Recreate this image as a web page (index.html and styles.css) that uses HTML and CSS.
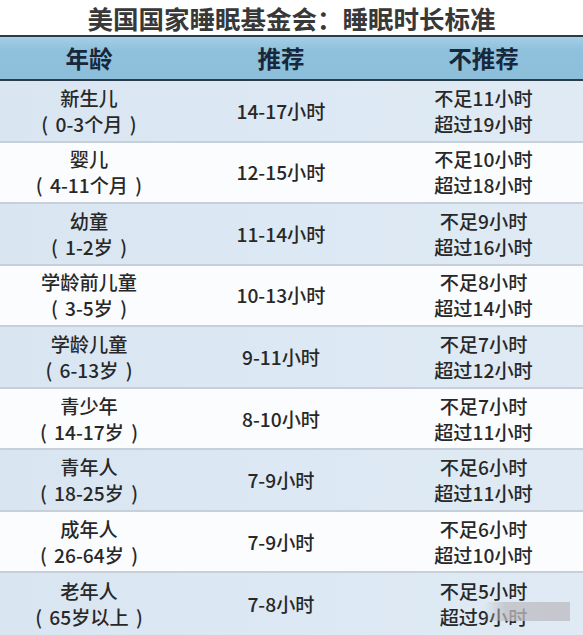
FILE: index.html
```html
<!DOCTYPE html>
<html lang="zh-CN">
<head>
<meta charset="utf-8">
<title>美国国家睡眠基金会：睡眠时长标准</title>
<link rel="stylesheet" href="styles.css">
</head>
<body>
<div class="page">
  <h1 class="title">美国国家睡眠基金会：睡眠时长标准</h1>
  <div class="head">
    <div class="cell">年龄</div>
    <div class="cell">推荐</div>
    <div class="cell">不推荐</div>
  </div>
  <div class="body">
    <div class="row alt">
      <div class="cell">新生儿<br>( 0-3个月 )</div>
      <div class="cell">14-17小时</div>
      <div class="cell">不足11小时<br>超过19小时</div>
    </div>
    <div class="row">
      <div class="cell">婴儿<br>( 4-11个月 )</div>
      <div class="cell">12-15小时</div>
      <div class="cell">不足10小时<br>超过18小时</div>
    </div>
    <div class="row alt">
      <div class="cell">幼童<br>( 1-2岁 )</div>
      <div class="cell">11-14小时</div>
      <div class="cell">不足9小时<br>超过16小时</div>
    </div>
    <div class="row">
      <div class="cell">学龄前儿童<br>( 3-5岁 )</div>
      <div class="cell">10-13小时</div>
      <div class="cell">不足8小时<br>超过14小时</div>
    </div>
    <div class="row alt">
      <div class="cell">学龄儿童<br>( 6-13岁 )</div>
      <div class="cell">9-11小时</div>
      <div class="cell">不足7小时<br>超过12小时</div>
    </div>
    <div class="row">
      <div class="cell">青少年<br>( 14-17岁 )</div>
      <div class="cell">8-10小时</div>
      <div class="cell">不足7小时<br>超过11小时</div>
    </div>
    <div class="row alt">
      <div class="cell">青年人<br>( 18-25岁 )</div>
      <div class="cell">7-9小时</div>
      <div class="cell">不足6小时<br>超过11小时</div>
    </div>
    <div class="row">
      <div class="cell">成年人<br>( 26-64岁 )</div>
      <div class="cell">7-9小时</div>
      <div class="cell">不足6小时<br>超过10小时</div>
    </div>
    <div class="row alt last">
      <div class="cell">老年人<br>( 65岁以上 )</div>
      <div class="cell">7-8小时</div>
      <div class="cell">不足5小时<br>超过9小时</div>
      <div class="mark"></div>
    </div>
  </div>
</div>
</body>
</html>
```
FILE: styles.css
```css
html, body {
  margin: 0;
  padding: 0;
  background: #ffffff;
}
.page {
  width: 583px;
  height: 635px;
  overflow: hidden;
  font-family: "Noto Sans CJK SC", "Noto Sans", sans-serif;
  color: #282828;
}
.title {
  margin: 0;
  padding-top: 1px;
  height: 34px;
  line-height: 34px;
  text-align: center;
  font-size: 25.5px;
  font-weight: 700;
  color: #383838;
}
.head {
  display: grid;
  grid-template-columns: 178px 206px 199px;
  height: 42px;
  align-items: center;
  background: linear-gradient(#a5cfe6, #8fc1dd 30%, #8dbfdb);
  border-top: 2px solid #2a3c4a;
  border-bottom: 2px solid #2a3c4a;
  font-size: 23.5px;
  font-weight: 700;
  color: #17283a;
}
.head .cell {
  line-height: 42px;
}
.body {
  display: grid;
  grid-template-rows: repeat(9, 1fr);
  height: 554px;
}
.row {
  position: relative;
  display: grid;
  grid-template-columns: 178px 206px 199px;
  align-items: center;
  background: #fbfcfe;
  border-bottom: 2px solid #c7d0d8;
  font-size: 19.2px;
  font-weight: 500;
  line-height: 26px;
  word-spacing: 3px;
}
.row.alt {
  background: linear-gradient(90deg, #d9e6f2, #dfeaf4);
}
.row.last {
  border-bottom: 0;
}
.cell {
  text-align: center;
  white-space: nowrap;
}
.mark {
  position: absolute;
  left: 484px;
  top: 29px;
  width: 86px;
  height: 19px;
  background: linear-gradient(90deg, rgba(190,190,195,0), rgba(190,190,195,0.75) 25%, rgba(190,190,195,0.8));
}
```
